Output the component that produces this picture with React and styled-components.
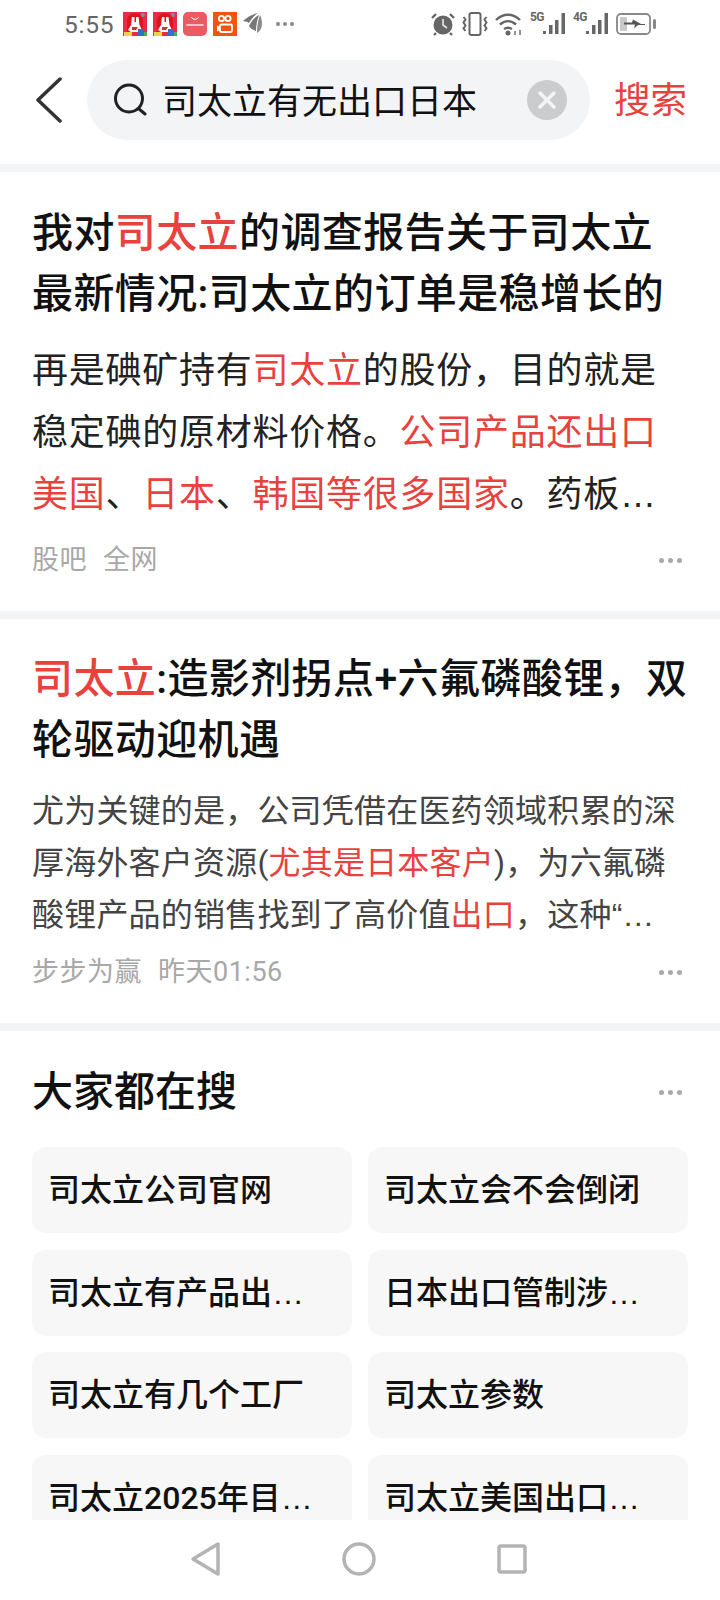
import React from "react";
import styled, { createGlobalStyle } from "styled-components";

const GlobalStyle = createGlobalStyle`
  html, body {
    margin: 0;
    padding: 0;
    background: #fff;
    font-family: Roboto, "Noto Sans CJK SC", "Noto Sans", sans-serif;
  }
  * { box-sizing: border-box; }
`;

const Page = styled.div`
  width: 720px;
  height: 1600px;
  display: flex;
  flex-direction: column;
  overflow: hidden;
  background: #fff;
`;

const StatusBar = styled.div`
  height: 50px;
  flex: none;
  padding: 12px 0 0 64px;
  display: flex;
  align-items: flex-start;
`;

const Time = styled.span`
  font-size: 24.5px;
  line-height: 26px;
  color: #666;
  letter-spacing: 0.8px;
  width: 59px;
`;

const AppIcons = styled.div`
  display: flex;
  gap: 6px;
  align-items: center;
  height: 24px;
`;

const StatusDots = styled.div`
  margin-left: 7px;
  display: flex;
  gap: 3px;

  i {
    width: 4px;
    height: 4px;
    border-radius: 50%;
    background: #888;
  }
`;

const StatusRight = styled.div`
  margin-left: auto;
  margin-right: 64px;
  display: flex;
  align-items: center;
  height: 24px;
  gap: 7px;
`;

const Signal = styled.div`
  width: 36px;
  height: 24px;
  display: flex;
  align-items: flex-start;
`;

const SignalLabel = styled.span`
  width: 13px;
  flex: none;
  font-size: 12px;
  line-height: 11px;
  font-weight: 700;
  letter-spacing: -0.6px;
  color: #666;
`;

const SearchRow = styled.div`
  height: 114px;
  flex: none;
  display: flex;
  align-items: flex-start;
  padding: 10px 33px 0 36px;
`;

const BackBtn = styled.div`
  width: 51px;
  height: 80px;
  flex: none;
  display: flex;
  align-items: center;
`;

const SearchBox = styled.div`
  width: 503px;
  height: 80px;
  flex: none;
  border-radius: 40px;
  background: #f3f4f6;
  display: flex;
  align-items: center;
  padding: 0 23px 0 26px;
`;

const Query = styled.span`
  flex: 1;
  margin-left: 15px;
  padding-top: 6px;
  font-size: 35px;
  line-height: 40px;
  color: #111;
`;

const ClearBtn = styled.div`
  width: 40px;
  height: 40px;
  border-radius: 50%;
  background: #cbcccd;
  display: flex;
  align-items: center;
  justify-content: center;
`;

const SearchAction = styled.span`
  margin-left: auto;
  font-size: 36.5px;
  line-height: 82px;
  color: #e8423f;
`;

const Card = styled.section`
  border-top: 8px solid #f3f4f6;
  padding: ${(p) => p.$pad};
  flex: none;
`;

const Title = styled.h2`
  margin: 0;
  font-size: 41px;
  line-height: 61px;
  font-weight: 500;
  color: #111;
  letter-spacing: 0.4px;
  white-space: nowrap;
`;

const Hit = styled.span`
  color: #e8423f;
`;

const Ell = styled.span`
  font-family: "Liberation Sans", sans-serif;
  letter-spacing: 0;
`;

const Body = styled.p`
  margin: ${(p) => p.$mt}px 0 0;
  font-size: ${(p) => p.$size}px;
  line-height: ${(p) => p.$lh}px;
  color: ${(p) => p.$color};
  letter-spacing: ${(p) => p.$ls}px;
  white-space: nowrap;
`;

const Meta = styled.div`
  margin-top: ${(p) => p.$mt}px;
  padding-bottom: ${(p) => p.$pb}px;
  display: flex;
  align-items: center;
  justify-content: space-between;
  font-size: 27px;
  letter-spacing: 0.5px;
  line-height: 36px;
  color: #a8a8a8;
`;

const MetaText = styled.div`
  display: flex;
  gap: 16px;
`;

const More = styled.div`
  display: flex;
  gap: 4px;
  padding-right: 6px;
`;

const Dot = styled.i`
  width: 5px;
  height: 5px;
  border-radius: 50%;
  background: #a9a9a9;
`;

const SectionHead = styled.div`
  display: flex;
  align-items: center;
  justify-content: space-between;
`;

const SectionTitle = styled.h3`
  margin: 0;
  font-size: 41px;
  line-height: 60px;
  font-weight: 500;
  color: #111;
`;

const ChipGrid = styled.div`
  margin-top: 25px;
  display: grid;
  grid-template-columns: 320px 320px;
  gap: 16.5px 16px;
`;

const Chip = styled.div`
  height: 86px;
  border-radius: 14px;
  background: #f7f7f7;
  padding-left: 16px;
  font-size: 32px;
  font-weight: 500;
  line-height: 86px;
  color: #111;
  white-space: nowrap;
`;

const Main = styled.div`
  height: 1356px;
  flex: none;
  overflow: hidden;
`;

const NavBar = styled.div`
  flex: 1;
  background: #fff;
  display: flex;
  align-items: center;
  justify-content: center;
  gap: 119px;
  padding: 0 2px 2px 0;
`;

const RabbitIcon = () => (
  <svg width="24" height="24" viewBox="0 0 24 24">
    <rect width="24" height="24" fill="#ea2a49" />
    <path d="M4 20V9c0-5 4-8 8-8s8 3 8 8v8z" fill="#e0141e" />
    <path d="M9 5h2.500v5h1.500V5h2.500l1 8 2 4-4 3H8l-3-2 3-5z" fill="#fff" />
    <path d="M9 15h6l-2 3H9z" fill="#cf3030" />
    <rect x="1" y="20" width="8" height="4" fill="#f2d04a" />
    <rect x="15" y="17" width="6" height="6" fill="#2d6fd2" />
    <rect x="21" y="20" width="3" height="4" fill="#4cae4f" />
    <circle cx="20" cy="3" r="2" fill="#7a8fb0" />
  </svg>
);

const ShopIcon = () => (
  <svg width="24" height="24" viewBox="0 0 24 24">
    <rect width="24" height="24" rx="5" fill="#ec5b63" />
    <path d="M8.500 5c.5 3 6.500 3 7 0" fill="none" stroke="#fff" strokeWidth="1" />
    <rect x="3.500" y="12" width="17" height="2" fill="#f7c3c5" />
  </svg>
);

const KwaiIcon = () => (
  <svg width="24" height="24" viewBox="0 0 24 24">
    <rect width="24" height="24" fill="#f2540f" />
    <g fill="none" stroke="#fff" strokeWidth="1.800">
      <circle cx="8.500" cy="6.500" r="2.600" />
      <circle cx="15" cy="6.500" r="2.600" />
      <rect x="7" y="12.500" width="12" height="7.500" rx="1.500" />
    </g>
    <path d="M7 15l-3-1.500v6L7 18z" fill="#fff" />
  </svg>
);

const FeatherIcon = () => (
  <svg width="20" height="24" viewBox="0 0 20 24">
    <path d="M0 9c3-3 9-7 15-8-3 2-7 6-9 10-1-1-4-2-6-2z" fill="#777" />
    <path d="M6 14c2-5 6-9 10-11-2 5-3 11-3 16-3-1-6-3-7-5z" fill="#777" />
    <path d="M14 21c0-7 1-13 3-18 3 6 3 15-3 18z" fill="#8a8a8a" />
  </svg>
);

const AlarmIcon = () => (
  <svg width="24" height="24" viewBox="0 0 24 24">
    <circle cx="12" cy="13" r="9.500" fill="#666" />
    <path d="M12 7v6l4 3" fill="none" stroke="#ddd" strokeWidth="1.800" />
    <path d="M1 6l4-4M23 6l-4-4M5 21l-2 2M19 21l2 2" stroke="#666" strokeWidth="2.400" />
  </svg>
);

const VibrateIcon = () => (
  <svg width="26" height="24" viewBox="0 0 26 24" fill="none" stroke="#666" strokeWidth="2">
    <rect x="7.500" y="1" width="11" height="22" rx="2" />
    <path d="M1.500 5l2 2.500-2 3 2 3-2 3 2 2.500M24.500 5l-2 2.500 2 3-2 3 2 3-2 2.500" />
  </svg>
);

const WifiIcon = () => (
  <svg width="28" height="24" viewBox="0 0 28 24">
    <g fill="none" stroke="#666" strokeWidth="2.400">
      <path d="M1 8c7-7 17-7 24 0" />
      <path d="M5 12.500c5-4.500 11-4.500 16 0" />
      <path d="M9 17c3-2 5-2 8 0" />
    </g>
    <circle cx="13" cy="21" r="2.500" fill="#666" />
    <path d="M20 19v4M25 18v5" stroke="#666" strokeWidth="1.400" />
  </svg>
);

const SignalIcon = ({ label }) => (
  <Signal>
    <SignalLabel>{label}</SignalLabel>
    <svg width="23" height="24" viewBox="0 0 23 24">
      <rect x="0" y="19" width="3" height="3" fill="#666" />
      <rect x="6" y="13" width="3.500" height="9" fill="#666" />
      <rect x="12" y="8" width="3.500" height="14" fill="#666" />
      <rect x="18.500" y="1" width="3.500" height="21" fill="#666" />
    </svg>
  </Signal>
);

const BatteryIcon = () => (
  <svg width="40" height="24" viewBox="0 0 40 24">
    <rect x="1" y="2" width="33" height="20" rx="4" fill="none" stroke="#888" strokeWidth="1.800" />
    <rect x="4" y="5" width="7" height="14" rx="1" fill="#c8c8c8" />
    <path d="M8 10.500h8l1-3 8 4.500h4v1h-7l-4 3.500 1-4H8z" fill="#555" />
    <rect x="37" y="7" width="3" height="10" rx="1.500" fill="#888" />
  </svg>
);

const chips = [
  "司太立公司官网",
  "司太立会不会倒闭",
  ["司太立有产品出"],
  ["日本出口管制涉"],
  "司太立有几个工厂",
  "司太立参数",
  ["司太立2025年目"],
  ["司太立美国出口"],
];

function MoreDots() {
  return (
    <More>
      <Dot />
      <Dot />
      <Dot />
    </More>
  );
}

export default function App() {
  return (
    <Page>
      <GlobalStyle />
      <StatusBar>
        <Time>5:55</Time>
        <AppIcons>
          <RabbitIcon />
          <RabbitIcon />
          <ShopIcon />
          <KwaiIcon />
          <FeatherIcon />
          <StatusDots>
            <i />
            <i />
            <i />
          </StatusDots>
        </AppIcons>
        <StatusRight>
          <AlarmIcon />
          <VibrateIcon />
          <WifiIcon />
          <SignalIcon label="5G" />
          <SignalIcon label="4G" />
          <BatteryIcon />
        </StatusRight>
      </StatusBar>

      <SearchRow>
        <BackBtn>
          <svg width="26" height="46" viewBox="0 0 26 46" fill="none" stroke="#333" strokeWidth="3.500" strokeLinecap="round" strokeLinejoin="round">
            <path d="M24 2L2 23l22 21" />
          </svg>
        </BackBtn>
        <SearchBox>
          <svg width="34" height="34" viewBox="0 0 34 34" fill="none" stroke="#222" strokeWidth="3" strokeLinecap="round">
            <circle cx="16" cy="15.500" r="13.500" />
            <path d="M26 26l6 5" />
          </svg>
          <Query>司太立有无出口日本</Query>
          <ClearBtn>
            <svg width="20" height="20" viewBox="0 0 20 20" stroke="#f3f4f6" strokeWidth="3.500" strokeLinecap="round">
              <path d="M3 3l14 14M17 3L3 17" />
            </svg>
          </ClearBtn>
        </SearchBox>
        <SearchAction>搜索</SearchAction>
      </SearchRow>

      <Main>
        <Card $pad="31px 32px 0">
          <Title>我对<Hit>司太立</Hit>的调查报告关于司太立</Title>
          <Title>最新情况:司太立的订单是稳增长的</Title>
          <Body $mt={15} $size={36} $lh={62} $ls={0.75} $color="#222">
            再是碘矿持有<Hit>司太立</Hit>的股份，目的就是
            <br />
            稳定碘的原材料价格。<Hit>公司产品还出口</Hit>
            <br />
            <Hit>美国</Hit>、<Hit>日本</Hit>、<Hit>韩国等很多国家</Hit>。药板<Ell>…</Ell>
          </Body>
          <Meta $mt={16} $pb={33}>
            <MetaText>
              <span>股吧</span>
              <span>全网</span>
            </MetaText>
            <MoreDots />
          </Meta>
        </Card>

        <Card $pad="30px 32px 0">
          <Title>
            <Hit>司太立</Hit>:造影剂拐点+六氟磷酸锂，双
          </Title>
          <Title>轮驱动迎机遇</Title>
          <Body $mt={14} $size={32} $lh={52} $ls={0.2} $color="#444">
            尤为关键的是，公司凭借在医药领域积累的深
            <br />
            厚海外客户资源(<Hit>尤其是日本客户</Hit>)，为六氟磷
            <br />
            酸锂产品的销售找到了高价值<Hit>出口</Hit>，这种<Ell>“…</Ell>
          </Body>
          <Meta $mt={13} $pb={33}>
            <MetaText>
              <span>步步为赢</span>
              <span>昨天01:56</span>
            </MetaText>
            <MoreDots />
          </Meta>
        </Card>

        <Card $pad="31px 32px 0">
          <SectionHead>
            <SectionTitle>大家都在搜</SectionTitle>
            <MoreDots />
          </SectionHead>
          <ChipGrid>
            {chips.map((c) =>
              Array.isArray(c) ? (
                <Chip key={c[0]}>
                  {c[0]}
                  <Ell>…</Ell>
                </Chip>
              ) : (
                <Chip key={c}>{c}</Chip>
              )
            )}
          </ChipGrid>
        </Card>
      </Main>

      <NavBar>
        <svg width="32" height="36" viewBox="0 0 32 36" fill="none" stroke="#b4b4b4" strokeWidth="3.500" strokeLinejoin="round">
          <path d="M28 3v30L3 18z" />
        </svg>
        <svg width="36" height="36" viewBox="0 0 36 36" fill="none" stroke="#b4b4b4" strokeWidth="3.500">
          <circle cx="18" cy="18" r="15" />
        </svg>
        <svg width="32" height="32" viewBox="0 0 32 32" fill="none" stroke="#b4b4b4" strokeWidth="3.500" strokeLinejoin="round">
          <rect x="3" y="3" width="26" height="26" rx="2" />
        </svg>
      </NavBar>
    </Page>
  );
}
